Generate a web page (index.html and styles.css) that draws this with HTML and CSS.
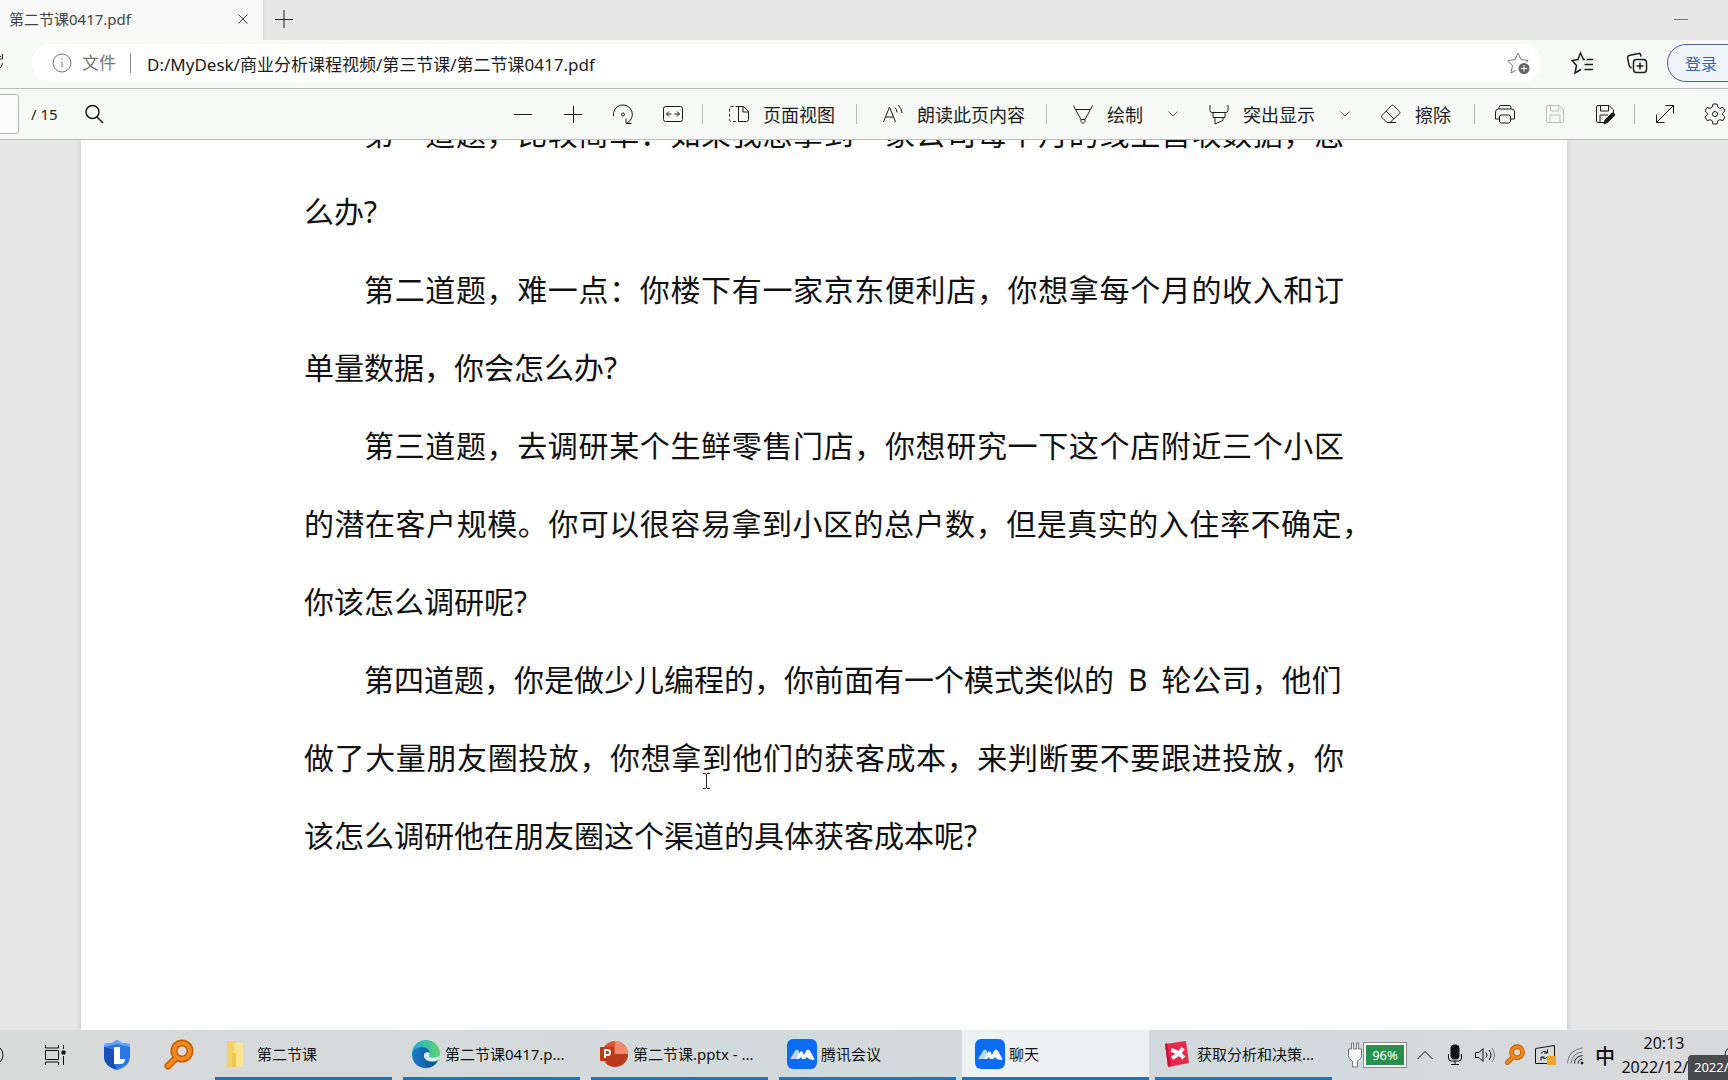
FILE: index.html
```html
<!DOCTYPE html>
<html lang="zh-CN">
<head>
<meta charset="utf-8">
<title>第二节课0417.pdf</title>
<link rel="stylesheet" href="styles.css">
</head>
<body>
<header class="tabstrip">
  <div class="tab">
    <span class="tab-title">第二节课0417.pdf</span>
    <button class="tab-close" aria-label="关闭标签页"><svg width="12" height="12" viewBox="0 0 12 12"><path d="M1.5 1.5l9 9M10.500 1.500l-9 9"/></svg></button>
  </div>
  <button class="new-tab" aria-label="新建标签页"><svg width="20" height="20" viewBox="0 0 20 20"><path d="M10 1v18M1 10.500h18"/></svg></button>
  <button class="minimize" aria-label="最小化"><svg width="14" height="4" viewBox="0 0 14 4"><path d="M0 1.500h14"/></svg></button>
</header>

<nav class="addressbar">
  <button class="reload" aria-label="刷新"><svg width="20" height="20" viewBox="0 0 20 20"><path d="M17 4A9 9 0 1 0 18.500 10M18.500 1v5h-5"/></svg></button>
  <div class="omnibox">
    <svg class="info" width="20" height="20" viewBox="0 0 20 20"><circle cx="10" cy="10" r="9"/><path d="M10 8.500v6M10 5v1.500"/></svg>
    <label class="scheme" for="url">文件</label>
    <input class="url" id="url" type="text" value="D:/MyDesk/商业分析课程视频/第三节课/第二节课0417.pdf">
    <button class="add-fav" aria-label="添加收藏"><svg width="24" height="24" viewBox="0 0 24 24"><path d="M9 19l-5 3 1.500-7.500L1 9.500l7-1L11 2l3 6.500 7 1-2 2"/><circle class="solid" cx="17" cy="17.500" r="5.500"/><path class="inv" d="M17 14.500v6M14 17.500h6"/></svg></button>
  </div>
  <button class="nav-icon" aria-label="收藏夹"><svg width="24" height="24" viewBox="0 0 24 24"><path d="M14 8.500h-1.500L9.500 2 7 8.500l-6 1 4.500 5L4 22l6-3.500M15.500 8.500H22M13.500 13.500H22M13.500 18.500H22"/></svg></button>
  <button class="nav-icon" aria-label="集锦"><svg width="24" height="24" viewBox="0 0 24 24"><rect x="8.500" y="8.500" width="13" height="13" rx="3"/><path d="M15 11.500v7M11.500 15h7M16 5.500l-.5-2q-.5-1.500-2-1L4 4.500q-1.500.5-1.500 2L4 14q.5 2 2.500 3"/></svg></button>
  <button class="login">登录<span class="avatar"></span></button>
</nav>

<div class="toolbar">
  <input class="page-no" type="text" aria-label="页码" value="">
  <span class="page-total">/ 15</span>
  <button class="find" aria-label="搜索"><svg width="20" height="20" viewBox="0 0 20 20"><circle cx="8.500" cy="8" r="6.500"/><path d="M13 13l6 6"/></svg></button>
  <div class="tools">
    <button class="tool" aria-label="缩小"><svg width="20" height="22" viewBox="0 0 20 22"><path d="M1 11.500h18"/></svg></button>
    <button class="tool" aria-label="放大"><svg width="20" height="22" viewBox="0 0 20 22"><path d="M1 11.500h18M10.500 3v17"/></svg></button>
    <button class="tool" aria-label="旋转"><svg width="22" height="22" viewBox="0 0 22 22"><path d="M1.500 13A9.500 9.500 0 1 1 15 20M14 15.500v5h5.500"/><circle cx="11" cy="11.500" r="1.500"/></svg></button>
    <button class="tool" aria-label="适合宽度"><svg width="22" height="22" viewBox="0 0 22 22"><rect x="1.500" y="3.500" width="19" height="15" rx="2"/><path d="M4.500 11h5M7 8.500L4.500 11 7 13.500M17.500 11h-5M15 8.500l2.500 2.500-2.500 2.500"/></svg></button>
    <i class="sep"></i>
    <button class="tool text"><svg width="22" height="22" viewBox="0 0 22 22"><path d="M10.500 3.500v15M10.500 3.500h5l5 5v8q0 2-2 2h-8M15 3.500v5.500h5.500"/><path stroke-dasharray="3 2" d="M10.500 3.500h-7q-2 0-2 2v11q0 2 2 2h7"/></svg>页面视图</button>
    <i class="sep"></i>
    <button class="tool text"><svg width="22" height="22" viewBox="0 0 22 22"><path d="M1.500 19L7.500 4l6 15M3.500 14h8M13 4.500q2 2 2 5M16 2q4 3.500 4 8"/></svg>朗读此页内容</button>
    <i class="sep"></i>
    <button class="tool text split"><svg width="22" height="22" viewBox="0 0 22 22"><path d="M1.500 2.500l2 4h15l2-4M3.500 6.500L9 16.500h4l5.500-10M9 16.500v2l2 2 2-2v-2"/></svg>绘制</button>
    <button class="drop" aria-label="绘制选项"><svg width="12" height="8" viewBox="0 0 12 8"><path d="M1.500 1.500L6 6l4.500-4.500"/></svg></button>
    <button class="tool text split"><svg width="22" height="22" viewBox="0 0 22 22"><path d="M2 2v5.500q0 2 2 2h14q2 0 2-2V2M5 9.500v5h12v-5M7 14.500V21l8-3.500v-3"/></svg>突出显示</button>
    <button class="drop" aria-label="突出显示选项"><svg width="12" height="8" viewBox="0 0 12 8"><path d="M1.500 1.500L6 6l4.500-4.500"/></svg></button>
    <button class="tool text erase"><svg width="22" height="22" viewBox="0 0 22 22"><path d="M13.500 2.500l6 6q1 1 0 2L10 19.500H7L2 14.500q-1-1 0-2l9.500-10q1-1 2 0zM6 8l8 8M7 19.500h9"/></svg>擦除</button>
    <i class="sep"></i>
    <button class="tool" aria-label="打印"><svg width="22" height="22" viewBox="0 0 22 22"><path d="M5 6V4.500q0-2 2-2h8q2 0 2 2V6M5.500 16h-4V9q0-3 3-3h13q3 0 3 3v7h-4"/><rect x="5.500" y="12" width="11" height="8" rx="2"/></svg></button>
    <button class="tool" aria-label="保存" disabled><svg width="22" height="22" viewBox="0 0 22 22"><path d="M4 2.500h11l4.500 4.500v11q0 1.500-1.500 1.500H4q-1.500 0-1.500-1.500V4Q2.500 2.500 4 2.500zM6.500 2.500V8h8V2.500M6 19.500v-7.500h10v7.500"/></svg></button>
    <button class="tool" aria-label="另存为"><svg width="22" height="22" viewBox="0 0 22 22"><path d="M10 19.500H4q-1.500 0-1.500-1.500V4Q2.500 2.500 4 2.500h11L19.500 7v3M6.500 2.500V8h8V2.500M6 19.500V12h8"/><path class="fill" d="M10 21l1-4 7-7q2.500-.5 3 2l-7.500 7.500z"/></svg></button>
    <i class="sep"></i>
    <button class="tool" aria-label="进入全屏"><svg width="22" height="22" viewBox="0 0 22 22"><path d="M2.500 19.500l17-17M11.500 2.500h8v8M2.500 11.500v8h8"/></svg></button>
    <button class="tool" aria-label="设置"><svg width="24" height="24" viewBox="0 0 24 24"><path d="M10 2h4l.8 3.200 2 1.100L20 5.400l2 3.500-2.400 2.300v1.600L22 15.100l-2 3.500-3.200-.9-2 1.100L14 22h-4l-.8-3.200-2-1.100-3.200.9-2-3.500 2.400-2.300v-1.600L2 8.900l2-3.500 3.200.9 2-1.100z"/><circle cx="12" cy="12" r="2.500"/></svg></button>
  </div>
</div>

<main class="viewer">
  <article class="paper">
    <p><span class="first">第一道题，比较简单：如果我想拿到一家公司每个月的线上营收数据，怎</span><span class="last">么办?</span></p>
    <p><span class="first">第二道题，难一点：你楼下有一家京东便利店，你想拿每个月的收入和订</span><span class="last">单量数据，你会怎么办?</span></p>
    <p><span class="first">第三道题，去调研某个生鲜零售门店，你想研究一下这个店附近三个小区</span><span class="hang">的潜在客户规模。你可以很容易拿到小区的总户数，但是真实的入住率不确定，</span><span class="last">你该怎么调研呢?</span></p>
    <p><span class="first last">第四道题，你是做少儿编程的，你前面有一个模式类似的<b class="latin">B</b>轮公司，他们</span><span>做了大量朋友圈投放，你想拿到他们的获客成本，来判断要不要跟进投放，你</span><span class="last">该怎么调研他在朋友圈这个渠道的具体获客成本呢?</span></p>
  </article>
  <svg class="cursor" width="9" height="18" viewBox="0 0 9 18"><path d="M1 1.500h2.500l1 1 1-1H8M4.500 2v14M1 16.500h2.500l1-1 1 1H8"/></svg>
</main>

<footer class="taskbar">
  <button class="launch cortana" aria-label="搜索"><svg width="24" height="24" viewBox="0 0 24 24"><circle cx="12" cy="12" r="10"/></svg></button>
  <button class="launch" aria-label="任务视图"><svg width="22" height="22" viewBox="0 0 22 22"><path d="M1.500 1v3h13V1M1.500 21v-3h13v3M1.500 6.500h13v9h-13zM19.500 1v4M19.500 12v9"/><path class="fill" d="M18 7h3v3h-3z"/></svg></button>
  <button class="launch" aria-label="联想电脑管家"><svg class="art" width="30" height="32" viewBox="0 0 30 32"><path fill="#2b78e4" d="M15 1l5 3 8 1v13q0 9-13 13Q2 27 2 18V5l8-1z"/><path fill="#174fb5" d="M15 31Q2 27 2 18V8l10 3v14z"/><path fill="#63a9f7" d="M15 1l5 3 8 1v3L15 5 2 8V5l8-1z"/><path fill="#fff" d="M12 8h6v12h5q0 4-3 5h-8z"/></svg></button>
  <button class="launch" aria-label="Everything"><svg class="art" width="30" height="32" viewBox="0 0 30 32"><path stroke="#c85b00" stroke-width="7" stroke-linecap="round" d="M4 27l8-8"/><circle cx="18" cy="12" r="8" stroke="#c85b00" stroke-width="7"/><path stroke="#f08a1c" stroke-width="4" stroke-linecap="round" d="M4 27l8-8"/><circle cx="18" cy="12" r="8" stroke="#f08a1c" stroke-width="4"/></svg></button>

  <div class="tasks">
    <button class="task"><svg class="art" width="30" height="30" viewBox="0 0 30 30"><path fill="#f6cf68" d="M4 2h9v26H4z"/><path fill="#fde38f" d="M11 4h9v24h-9z"/><path fill="#f0c355" d="M9 14h4v14H9z"/></svg>第二节课</button>
    <button class="task"><svg class="art" width="30" height="30" viewBox="0 0 30 30"><defs><linearGradient id="edgeTop" x1="0" x2="1"><stop offset="0" stop-color="#22a7dc"/><stop offset="1" stop-color="#5fd36a"/></linearGradient><linearGradient id="edgeLow" x1="0" x2="1"><stop offset="0" stop-color="#1a7fc8"/><stop offset="1" stop-color="#0d4a91"/></linearGradient></defs><circle cx="15" cy="15" r="14" fill="url(#edgeTop)"/><path fill="url(#edgeLow)" d="M1 14q3-6 10-6 6 0 8 6-3-2-5 0-2 4 2 7 5 3 11 0-4 8-12 8Q1 28 1 14z"/><path fill="#d9eef6" d="M13 15q2-3 5-1 1 2 0 4 5 2 11-1-1 4-4 5-9 2-12-4z"/></svg>第二节课0417.p...</button>
    <button class="task"><svg class="art" width="30" height="30" viewBox="0 0 30 30"><circle cx="16" cy="15" r="13" fill="#d9542f"/><path fill="#f08b6c" d="M16 2a13 13 0 0 1 13 13H16z"/><path fill="#b93a1c" d="M16 15h13a13 13 0 0 1-22 9z"/><rect x="1" y="8" width="14" height="14" rx="1" fill="#bb3a1b"/><path stroke="#fff" stroke-width="2" d="M6 19v-8h3q2 0 2 2.500T9 16H6"/></svg>第二节课.pptx - ...</button>
    <button class="task"><svg class="art" width="30" height="30" viewBox="0 0 30 30"><rect width="30" height="30" rx="6" fill="#0a6cf5"/><path fill="#b9d6ff" d="M3 20l5-8q2-3 4 0v4l-3 4z"/><path fill="#fff" d="M9 20l4-7q2-2 3 1l1 2 2-4q2-3 4 0l4 7q1 2-1 2l-4-1-2-2-2 2h-3l-1-2-2 2z"/></svg>腾讯会议</button>
    <button class="task active"><svg class="art" width="30" height="30" viewBox="0 0 30 30"><rect width="30" height="30" rx="6" fill="#0a6cf5"/><path fill="#b9d6ff" d="M3 20l5-8q2-3 4 0v4l-3 4z"/><path fill="#fff" d="M9 20l4-7q2-2 3 1l1 2 2-4q2-3 4 0l4 7q1 2-1 2l-4-1-2-2-2 2h-3l-1-2-2 2z"/></svg>聊天</button>
    <button class="task"><svg class="art" width="30" height="30" viewBox="0 0 30 30"><path fill="#e8294c" d="M2 5l21-3 3 22-21 4z"/><path fill="#c31638" d="M2 5l2-1 4 23-3 1z"/><path stroke="#fff" stroke-width="4" d="M8 11q6 1 13 8M20 9q-4 7-11 10"/></svg>获取分析和决策...</button>
  </div>

  <div class="tray">
    <div class="battery">
      <svg class="art" width="14" height="26" viewBox="0 0 14 26"><path fill="#fff" stroke="#777" d="M3.500 1v6h-3v7q0 3 4 5v6h5v-6q4-2 4-5V7h-3V1h-2v6h-3V1z"/></svg>
      <span class="charge">96%</span>
    </div>
    <button class="tray-icon" aria-label="显示隐藏的图标"><svg width="18" height="12" viewBox="0 0 18 12"><path d="M1.500 10L9 2.500l7.500 7.500"/></svg></button>
    <button class="tray-icon" aria-label="麦克风"><svg width="16" height="22" viewBox="0 0 16 22"><rect class="fill" x="4" y="1" width="8" height="14" rx="3"/><path d="M1.500 10v4q0 3 3 3h7q3 0 3-3v-4M8 17v3.500M4 20.500h8"/></svg></button>
    <button class="tray-icon" aria-label="音量"><svg width="22" height="18" viewBox="0 0 22 18"><path d="M1.500 6.500H5l4-4v13l-4-4H1.500zM12 6.500q2 2.500 0 5M15 4q4 5 0 10"/><path class="faint" d="M18 2q5 7 0 14"/></svg></button>
    <button class="tray-icon" aria-label="Everything"><svg class="art" width="22" height="22" viewBox="0 0 30 32"><path stroke="#c85b00" stroke-width="7" stroke-linecap="round" d="M4 27l8-8"/><circle cx="18" cy="12" r="8" stroke="#c85b00" stroke-width="7"/><path stroke="#f08a1c" stroke-width="4" stroke-linecap="round" d="M4 27l8-8"/><circle cx="18" cy="12" r="8" stroke="#f08a1c" stroke-width="4"/></svg></button>
    <button class="tray-icon" aria-label="更新"><svg width="22" height="22" viewBox="0 0 22 22"><path d="M1.500 4.500l19-3v18h-19zM7 9.500q3-4 6-1M13.500 5.500v3.500H10M14 12q-2 4-6 1.500M7 16.500V13h3.500"/><path fill="#f5a32a" stroke="none" d="M13 12h9v9h-9z"/></svg></button>
    <button class="tray-icon" aria-label="网络"><svg width="20" height="20" viewBox="0 0 20 20"><g class="faint"><path d="M2.500 18.500Q3 5 17.500 3M6 18.500Q7 8 17.500 7"/></g><path d="M9.500 18.500q0-7 8-8M13 18.500q0-4 4.500-4.500"/><circle class="fill" cx="17" cy="18" r="1"/></svg></button>
    <button class="tray-icon ime">中</button>
    <div class="clock"><span>20:13</span><span>2022/12/13</span></div>
    <button class="notice" aria-label="通知"><svg width="20" height="20" viewBox="0 0 20 20"><circle cx="10" cy="10" r="9"/></svg></button>
    <span class="tip">2022/</span>
  </div>
</footer>
</body>
</html>
```
FILE: styles.css
```css
* { box-sizing: border-box; }

body {
  margin: 0;
  height: 100vh;
  display: flex;
  flex-direction: column;
  overflow: hidden;
  background: #e6e6e6;
  color: #1c1c1c;
  font-family: "Noto Sans", "Noto Sans CJK SC", sans-serif;
  font-size: 15px;
}

button {
  display: flex;
  align-items: center;
  justify-content: center;
  flex: none;
  margin: 0;
  padding: 0;
  border: 0;
  background: none;
  color: inherit;
  font: inherit;
  white-space: nowrap;
}

input {
  margin: 0;
  padding: 0;
  border: 0;
  background: none;
  color: inherit;
  font: inherit;
}

svg {
  display: block;
  flex: none;
  fill: none;
  stroke: currentColor;
}

svg.art { stroke: none; }
svg .fill { fill: currentColor; }
svg .faint { opacity: .5; }

/* tab strip */
.tabstrip {
  display: flex;
  flex: none;
  height: 40px;
  background: #e7e7e7;
}

.tab {
  display: flex;
  align-items: center;
  width: 263px;
  padding: 0 10px 2px 9px;
  background: #f8f9f8;
  color: #444;
  box-shadow: 1px 0 2px #d2d2d2;
}

.tab-title { padding-bottom: 2px; }
.tab-close { margin-left: auto; padding: 4px; }
.new-tab { width: 42px; padding-bottom: 2px; }
.minimize { margin-left: auto; margin-right: 40px; color: #777; }

/* address bar */
.addressbar {
  display: flex;
  align-items: center;
  flex: none;
  height: 49px;
  padding-bottom: 2px;
  overflow: hidden;
  background: #f7f9f7;
  border-bottom: 1px solid #bcbfbd;
}

.reload { width: 20px; margin-left: -16px; margin-right: 28px; }

.omnibox {
  display: flex;
  align-items: center;
  flex: 1;
  height: 38px;
  padding: 0 10px 0 20px;
  border-radius: 19px;
  background: #fff;
  font-size: 17px;
}

.info { color: #777; }

.scheme {
  margin-left: 10px;
  padding-right: 14px;
  border-right: 1px solid #888;
  color: #757575;
  line-height: 20px;
}

.url { flex: 1; margin-left: 16px; color: #1a1a1a; outline: 0; }
.add-fav { color: #777; }
.add-fav .solid { fill: #666; stroke: none; }
.add-fav .inv { stroke: #fff; }

.nav-icon { width: 24px; margin-left: 30px; stroke-width: 1.5; }
.nav-icon + .nav-icon { margin-left: 30px; }

.login {
  width: 88px;
  height: 38px;
  margin-left: 18px;
  margin-right: -27px;
  padding-left: 17px;
  justify-content: flex-start;
  gap: 11px;
  border: 1px solid #4a5d8f;
  border-radius: 19px;
  background: #f0f4fb;
  color: #3465ad;
  font-size: 16px;
}

.avatar { width: 28px; height: 28px; border-radius: 50%; background: #c9c9c9; }

/* reader toolbar */
.toolbar {
  display: flex;
  align-items: center;
  flex: none;
  height: 51px;
  overflow: hidden;
  background: #f7f9f7;
  border-bottom: 1px solid #bcbfbd;
}

.page-no {
  width: 40px;
  height: 40px;
  margin-left: -21px;
  border: 1px solid #b5b5b5;
  border-radius: 3px;
  background: #fbfcfb;
}

.page-total { margin-left: 12px; font-size: 15px; }
.find { margin-left: 26px; stroke-width: 1.5; }

.tools {
  display: flex;
  align-items: center;
  margin-left: auto;
  margin-right: -12px;
  font-size: 18px;
}

.tool { width: 50px; height: 40px; }
.tool:disabled { color: #bbb; }
.tool.text { width: auto; gap: 13px; padding: 0 17px 0 20px; }
.tool.split { padding-right: 14px; }
.tool.erase { padding-right: 19px; }
.drop { width: 31px; height: 40px; color: #666; }
.sep { width: 1px; height: 20px; margin: 0 5px 0 4px; background: #b5b8b6; }

/* document */
.viewer {
  position: relative;
  flex: 1;
  min-height: 0;
  padding: 0 161px 0 81px;
  overflow: hidden;
}

.paper {
  height: 100%;
  padding: 0 223px;
  overflow: hidden;
  background: #fff;
  box-shadow: 0 0 5px #bbb;
  color: #111;
  font-size: 30px;
  line-height: 78px;
}

.paper p { margin: 0; }
.paper p:first-child { margin-top: -45px; }

.paper span {
  display: block;
  white-space: nowrap;
  text-align: justify;
  text-align-last: justify;
}

.paper .first { padding-left: 60px; }
.paper .last { text-align-last: left; }
.paper .hang { margin-right: -28px; }
.latin { margin: 0 14px; font-weight: 400; }

.cursor { position: absolute; left: 702px; top: 632px; color: #222; }

/* taskbar */
.taskbar {
  display: flex;
  align-items: stretch;
  flex: none;
  height: 50px;
  overflow: hidden;
  background: linear-gradient(90deg, #d8d9d9, #d3dadc 40%, #d2d9dc 75%, #d9dadb);
  color: #111;
}

.launch { width: 62px; }
.cortana { margin-left: -38px; }

.tasks { display: flex; gap: 11px; margin-left: 5px; }

.task {
  width: 177px;
  padding: 0 8px;
  justify-content: flex-start;
  gap: 4px;
  border-bottom: 3px solid #1b76bd;
}

.task.active {
  width: 187px;
  margin: 0 -5px;
  padding: 0 13px;
  background: #edf1f2;
}

.tray { position: relative; display: flex; margin-left: auto; }

.battery { display: flex; align-items: center; gap: 2px; margin-right: 4px; }

.charge {
  width: 42px;
  border: 2px solid #fff;
  outline: 1px solid #8a8a8a;
  background: #27904b;
  color: #fff;
  font-size: 13px;
  line-height: 20px;
  text-align: center;
}

.tray-icon { width: 30px; }
.ime { font-size: 20px; font-weight: 500; }

.clock {
  display: flex;
  flex-direction: column;
  align-items: center;
  width: 88px;
  padding-top: 1px;
  font-size: 16px;
  line-height: 24px;
}

.notice { width: 20px; margin-left: 16px; margin-right: -16px; }

.tip {
  position: absolute;
  right: 0;
  bottom: 0;
  width: 40px;
  padding-left: 6px;
  border-radius: 4px 0 0 0;
  background: #4a4b4d;
  color: #fff;
  font-size: 13px;
  line-height: 25px;
  white-space: nowrap;
  overflow: hidden;
}
```
